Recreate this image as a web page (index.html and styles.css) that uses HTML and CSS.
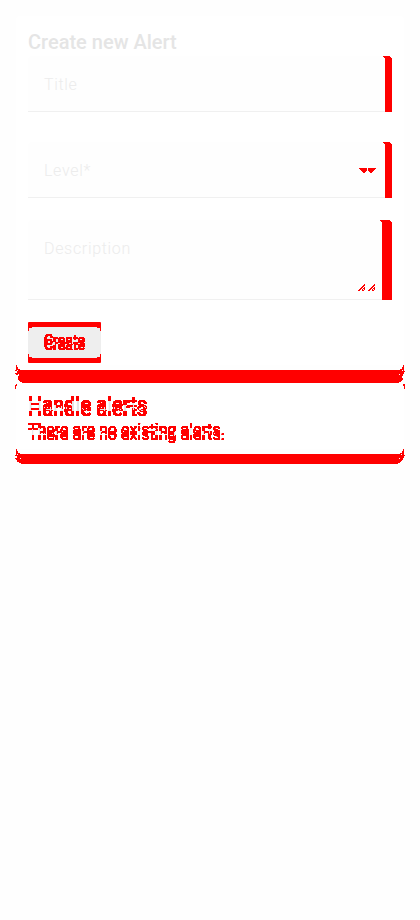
FILE: index.html
```
<!DOCTYPE html>
<html lang="en">
<head>
<meta charset="utf-8">
<title>Create new Alert</title>
<link rel="stylesheet" href="styles.css">
</head>
<body>
<svg class="defs" width="0" height="0" aria-hidden="true">
  <!-- Red where the text and its shifted copy differ, grey where they overlap -->
  <filter id="ghost" x="-5%" y="-50%" width="110%" height="200%" color-interpolation-filters="sRGB">
    <feOffset in="SourceAlpha" dy="-5" result="up"/>
    <feComposite in="SourceAlpha" in2="up" operator="in" result="both"/>
    <feFlood flood-color="#e5e5e5"/>
    <feComposite in2="both" operator="in" result="grey"/>
    <feComposite in="SourceAlpha" in2="up" operator="arithmetic" k2="1" k3="-1" result="a"/>
    <feComposite in="up" in2="SourceAlpha" operator="arithmetic" k2="1" k3="-1" result="b"/>
    <feMerge result="diff"><feMergeNode in="a"/><feMergeNode in="b"/></feMerge>
    <feComponentTransfer in="diff" result="hard"><feFuncA type="linear" slope="100" intercept="-2"/></feComponentTransfer>
    <feFlood flood-color="#ff0000"/>
    <feComposite in2="hard" operator="in" result="red"/>
    <feMerge><feMergeNode in="grey"/><feMergeNode in="red"/></feMerge>
  </filter>
</svg>
<main class="page">
  <section class="card create">
    <h2 class="heading">Create new Alert</h2>
    <div class="field"><span class="label">Title</span><i class="edge"></i></div>
    <div class="field level"><span class="label">Level*</span>
      <svg class="arrows" width="17" height="5" shape-rendering="crispEdges"><path fill="red" d="M0 0h8v3h-1v1h-1v1h-2v-1h-1v-1h-1v-1h-1v-1h-1zM9 0h8v1h-1v1h-1v1h-1v1h-1v1h-2v-1h-1v-1h-1z"/></svg>
      <i class="edge"></i></div>
    <div class="field area"><span class="label">Description</span>
      <svg class="grips" width="17" height="7" shape-rendering="crispEdges"><path id="grip" fill="red" d="M0 6h2v1H0zM1 5h2v1H1zM2 4h2v1H2zM3 3h2v1H3zM4 2h2v1H4zM5 1h2v1H5zM6 0h1v1H6zM4 6h2v1H4zM4 5h1v1H4zM5 4h1v1H5zM6 3h1v2H6zM6 5h1v1H6z"/><use href="#grip" x="10"/></svg>
      <i class="edge"></i></div>
    <button class="button"><span class="ghost">Create</span></button>
  </section>
  <svg class="band top" width="390" height="25" shape-rendering="crispEdges"><path fill="red" d="M1 0h1v2h1v2h2v1h380v-1h2v-2h1v-2h1v6h1v1h-1v2h-1v2h-1v2h1v2h-1v1h-1v1h-2v1H7v-1H5v-1H4v-1H3v-2H3v-2h1v-1H1v-1H0v-1h2v-2H0v-1h1zM1 19h1v2H1v3H0v-4h1zM388 19h2v5h-1v-3h-1z"/><path fill="white" d="M2 5h1v1H2zM3 9h1v1H3zM387 5h1v1h-1zM384 9h1v1h-1z"/></svg>
  <section class="card handle">
    <h2 class="heading"><span class="ghost">Handle alerts</span></h2>
    <p class="message"><span class="ghost">There are no existing alerts.</span></p>
  </section>
  <svg class="band" width="390" height="16" shape-rendering="crispEdges"><path fill="red" d="M1 0h1v2h1v2h2v1h380v-1h2v-2h1v-2h1v6h1v1h-1v2h-1v2h-1v1h-1v1h-1v1h-2v1H6v-1H4v-1H2v-2H1v-1H0v-1h2v-2H0v-1h1z"/><path fill="white" d="M2 5h1v1H2zM5 9h1v1H5zM386 5h1v1h-1zM384 9h1v1h-1z"/></svg>
</main>
</body>
</html>
```
FILE: styles.css
```
* { box-sizing: border-box; }
body {
  margin: 0;
  min-height: 920px;
  background: #fefefe;
  font-family: Roboto, "Liberation Sans", sans-serif;
}
.defs { position: absolute; }
.page { padding: 16px 15px 0; display: flex; flex-direction: column; }
.card { margin-left: 1px; margin-right: 1px; background: #fff; padding: 0 12px; }
.create { height: 349px; padding-top: 14px; border-radius: 4px 4px 0 0; }
.heading { margin: 0; font-size: 20px; line-height: 24px; font-weight: 500; color: #e5e5e5; }
.field {
  position: relative;
  width: 364px;
  height: 56px;
  margin-top: 2px;
  padding: 19px 16px 0;
  background: #fefefe;
  border-bottom: 1px solid #f0f0f0;
  border-radius: 4px 4px 0 0;
  line-height: 19px;
}
.level { margin-top: 30px; }
.area { height: 80px; margin-top: 22px; }
.label { font-size: 16px; font-weight: 300; letter-spacing: .68px; color: #ececec; }
.edge {
  position: absolute;
  right: 0;
  top: 0;
  bottom: -1px;
  width: 9px;
  background: red;
  clip-path: polygon(0 0, 7px 0, 7px 1px, 8px 1px, 8px 2px, 9px 2px, 9px 100%, 2px 100%, 2px 2px, 1px 2px, 1px 1px, 0 1px);
}
.area .edge {
  width: 12px;
  clip-path: polygon(0 0, 10px 0, 10px 1px, 11px 1px, 11px 2px, 12px 2px, 12px 100%, 2px 100%, 2px 2px, 1px 2px, 1px 1px, 0 1px);
}
.arrows { position: absolute; right: 16px; top: 26px; }
.grips { position: absolute; right: 17px; bottom: 8px; }
.button {
  display: block;
  width: 73px;
  height: 41px;
  margin-top: 22px;
  padding: 5px 0 0;
  border: 0;
  background:
    linear-gradient(#eee, #eee) 4px 5px / 65px 31px no-repeat,
    linear-gradient(#eee, #eee) 1px 6px / 71px 29px no-repeat,
    linear-gradient(#eee, #eee) 0 9px / 73px 23px no-repeat,
    red;
  border-radius: 1px;
  font: 500 14px/36px Roboto, "Liberation Sans", sans-serif;
  color: #000;
}
.ghost { display: inline-block; filter: url(#ghost); }
.band { display: block; height: 16px; }
.band.top { height: 25px; }
.handle { height: 59px; padding-top: 7px; color: #000; }
.handle .heading { color: #000; }
.message { margin: 2px 0 0; font-size: 16px; line-height: 24px; }
```
